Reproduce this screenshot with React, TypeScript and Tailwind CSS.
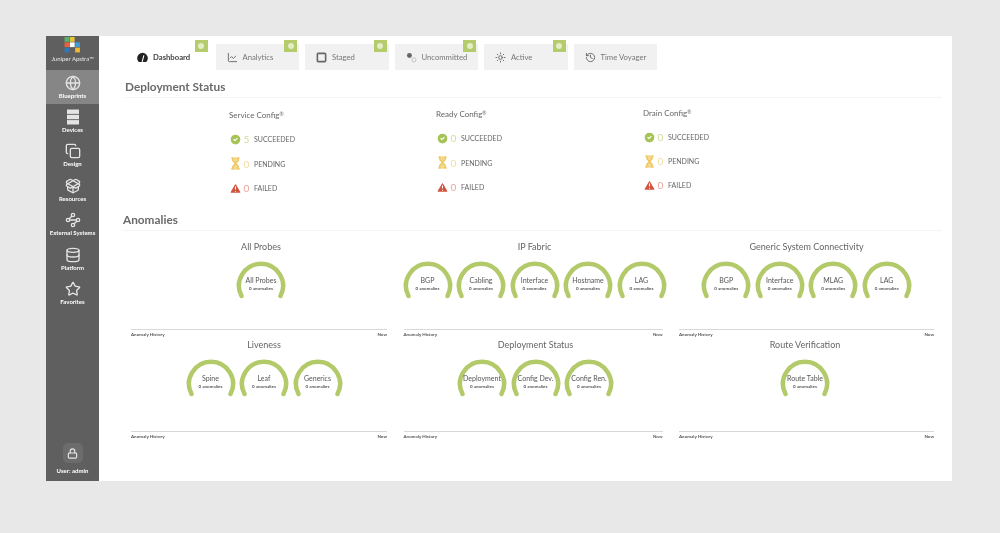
import React from 'react';
import { ChartLine, CircleCheck, Copy, Database, Globe, History, Hourglass, Lock, PackageOpen, Star, TriangleAlert, Waypoints, Sun, Square } from 'lucide-react';

const RackIcon: React.FC<{ className?: string }> = ({ className }) => (
  <svg viewBox="0 0 16 16" className={className} fill="currentColor">
    <rect x="2" y="0.5" width="12" height="4.4" />
    <rect x="2" y="5.8" width="12" height="4.4" />
    <rect x="2" y="11.1" width="12" height="4.4" />
  </svg>
);

const DashIcon: React.FC<{ className?: string }> = ({ className }) => (
  <svg viewBox="0 0 16 16" className={className}>
    <path d="M2.5 14.5 A7.8 7.8 0 1 1 13.5 14.5 Z" fill="currentColor" />
    <path d="M7.5 14.5 L10 5" stroke="#fff" strokeWidth="1.6" />
  </svg>
);

const UncommittedIcon: React.FC<{ className?: string }> = ({ className }) => (
  <svg viewBox="0 0 16 16" className={className}>
    <circle cx="5" cy="5" r="3.6" fill="#666" />
    <circle cx="11.5" cy="11.5" r="3" fill="none" stroke="#bbb" strokeWidth="1.2" />
  </svg>
);

const navItems = [
  { label: 'Blueprints', icon: Globe, active: true },
  { label: 'Devices', icon: RackIcon },
  { label: 'Design', icon: Copy },
  { label: 'Resources', icon: PackageOpen },
  { label: 'External Systems', icon: Waypoints },
  { label: 'Platform', icon: Database },
  { label: 'Favorites', icon: Star },
];

const tabs = [
  { label: 'Dashboard', icon: DashIcon, active: true, badge: true, stroke: 2 },
  { label: 'Analytics', icon: ChartLine, badge: true, stroke: 2 },
  { label: 'Staged', icon: Square, badge: true, stroke: 3.5 },
  { label: 'Uncommitted', icon: UncommittedIcon, badge: true, stroke: 2 },
  { label: 'Active', icon: Sun, badge: true, stroke: 2 },
  { label: 'Time Voyager', icon: History, stroke: 2 },
];

const configs = [
  { title: 'Service Config', ok: 5, shift: 'mt-0', gap: 'gap-y-[12.5px]' },
  { title: 'Ready Config', ok: 0, shift: '-mt-[1px]', gap: 'gap-y-[12.5px]' },
  { title: 'Drain Config', ok: 0, shift: '-mt-[2px]', gap: 'gap-y-[12px]' },
];

const Gauge: React.FC<{ name: string }> = ({ name }) => (
  <div className="relative w-[50px] h-[42px] shrink-0">
    <svg viewBox="0 0 50 42" className="w-[50px] h-[42px]">
      <path d="M5.5 37 A22 22 0 1 1 44.5 37" fill="none" stroke="#b3ca6a" strokeWidth="4.5" strokeLinecap="round" />
    </svg>
    <div className="absolute left-[-6px] right-[-6px] top-[17px] text-center">
      <div className="text-[7px] leading-[9px] text-[#555]">{name}</div>
      <div className="text-[4.5px] leading-[7px] font-bold text-[#555]">0 anomalies</div>
    </div>
  </div>
);

const ProbeGroup: React.FC<{ title: string; names: string[]; shift: string; height: string; gaugeGap: string }> = ({ title, names, shift, height, gaugeGap }) => (
  <div className="flex flex-col">
    <div className={`${shift} ${height}`}>
      <div className="text-center text-[9px] leading-[12px] text-[#666]">{title}</div>
      <div className={`flex justify-center gap-[3.5px] ${gaugeGap}`}>
        {names.map((n) => <Gauge key={n} name={n} />)}
      </div>
    </div>
    <div className="border-t border-[#d8d8d8]" />
    <div className="flex justify-between h-[9px] pt-[2px] text-[4.5px] leading-[6px] font-bold text-[#555]">
      <span>Anomaly History</span>
      <span>Now</span>
    </div>
  </div>
);

export default function App() {
  return (
    <div className="w-[1000px] h-[533px] bg-[#e8e8e8] pt-[36px] pl-[46px] overflow-hidden blur-[0.5px] font-['Lato',sans-serif]">
      <div className="w-[906px] h-[445px] bg-white flex">
        <aside className="w-[53px] bg-[#5f5f5f] flex flex-col items-stretch text-white">
          <div className="h-[34px] flex flex-col items-center pt-[1px]">
            <svg viewBox="0 0 16 16" className="w-[17px] h-[17px]">
              <rect x="0.5" y="0" width="4.5" height="4.5" fill="#5fb06c" />
              <rect x="5.5" y="0" width="4.5" height="4.5" fill="#e2c63f" />
              <rect x="0.5" y="5" width="4.5" height="4.5" fill="#e8603f" />
              <rect x="5.5" y="5" width="4.5" height="4.5" fill="#ffffff" />
              <rect x="10.5" y="5" width="4.5" height="4.5" fill="#3f9bd6" />
              <rect x="0.5" y="10" width="4.5" height="4.5" fill="#3577b5" />
              <rect x="10.5" y="10" width="4.5" height="4.5" fill="#f0b92f" />
            </svg>
            <span className="text-[6px] leading-[8px] mt-[1px] text-[#e8e8e8]">Juniper Apstra™</span>
          </div>
          {navItems.map(({ label, icon: Icon, active }) => (
            <div key={label} className={`h-[34.4px] flex flex-col items-center justify-center ${active ? 'bg-[#868686]' : ''}`}>
              <Icon className="w-[16px] h-[16px] text-[#e4e4e4]" strokeWidth={2} />
              <span className="text-[6px] leading-[8px] mt-[1px] font-bold whitespace-nowrap">{label}</span>
            </div>
          ))}
          <div className="mt-auto pb-[6px] flex flex-col items-center">
            <div className="w-[20px] h-[20px] rounded-[5px] bg-[#6c6c6c] flex items-center justify-center">
              <Lock className="w-[11px] h-[11px] text-[#e4e4e4]" strokeWidth={2.5} />
            </div>
            <span className="text-[6px] leading-[9px] mt-[3px] font-bold">User: admin</span>
          </div>
        </aside>

        <main className="flex-1 min-w-0 pl-[26px] pr-[10px]">
          <div className="flex gap-[6px] pt-[8px] ml-[1px]">
            {tabs.map(({ label, icon: Icon, active, badge, stroke }) => (
              <div key={label} className={`relative w-[83.5px] h-[26px] flex items-center pl-[11px] gap-[5px] ${active ? 'bg-white' : 'bg-[#f1f1f1]'}`}>
                <Icon className={`w-[11px] h-[11px] ${active ? 'text-[#222]' : 'text-[#666]'}`} strokeWidth={stroke} />
                <span className={`text-[7.7px] leading-[10px] whitespace-nowrap ${active ? 'font-bold text-[#444]' : 'text-[#777]'}`}>{label}</span>
                {badge && (
                  <span className="absolute right-[2px] top-[-4px] w-[13px] h-[12px] bg-[#b5cc6c] flex items-center justify-center">
                    <span className="w-[6px] h-[6px] rounded-full bg-[#e4edc8]" />
                  </span>
                )}
              </div>
            ))}
          </div>

          <h2 className="mt-[9px] text-[11.8px] leading-[16px] font-bold text-[#6a6a6a]">Deployment Status</h2>
          <div className="mt-[2px] border-t border-[#f4f4f4]" />

          <div className="flex pl-[104px] mt-[12px]">
            {configs.map((c) => (
              <div key={c.title} className={`w-[207px] shrink-0 ${c.shift}`}>
                <div className="h-[10px] text-[8px] leading-[10px] text-[#666]">{c.title}<sup className="text-[5px] leading-none">®</sup></div>
                <div className={`mt-[13px] flex flex-col ${c.gap}`}>
                  <div className="h-[12px] flex items-center gap-[1px]">
                    <CircleCheck className="w-[13px] h-[13px] text-white fill-[#a5c455]" />
                    <span className="w-[7px] mr-[3px] text-center text-[10px] leading-[12px] text-[#cfdc9c]">{c.ok}</span>
                    <span className="text-[7px] leading-[12px] text-[#666]">SUCCEEDED</span>
                  </div>
                  <div className="h-[12px] flex items-center gap-[1px]">
                    <Hourglass className="w-[13px] h-[13px] text-[#efc55a] fill-[#f3d98f]" strokeWidth={2.5} />
                    <span className="w-[7px] mr-[3px] text-center text-[10px] leading-[12px] text-[#f2dc9f]">0</span>
                    <span className="text-[7px] leading-[12px] text-[#666]">PENDING</span>
                  </div>
                  <div className="h-[12px] flex items-center gap-[1px]">
                    <TriangleAlert className="w-[13px] h-[13px] text-white fill-[#d0533f]" />
                    <span className="w-[7px] mr-[3px] text-center text-[10px] leading-[12px] text-[#e8a79c]">0</span>
                    <span className="text-[7px] leading-[12px] text-[#666]">FAILED</span>
                  </div>
                </div>
              </div>
            ))}
          </div>

          <h2 className="mt-[18px] -ml-[2px] text-[11.8px] leading-[16px] font-bold text-[#6a6a6a]">Anomalies</h2>
          <div className="-ml-[2px] mt-[2px] border-t border-[#f4f4f4]" />

          <div className="grid grid-cols-[256px_259px_255px] gap-x-[16.5px] ml-[6px] mt-[10px]">
            <ProbeGroup title="All Probes" names={['All Probes']} shift="pl-[4px]" height="h-[88px]" gaugeGap="mt-[6px]" />
            <ProbeGroup title="IP Fabric" names={['BGP', 'Cabling', 'Interface', 'Hostname', 'LAG']} shift="pl-[3px]" height="h-[88px]" gaugeGap="mt-[6px]" />
            <ProbeGroup title="Generic System Connectivity" names={['BGP', 'Interface', 'MLAG', 'LAG']} shift="" height="h-[88px]" gaugeGap="mt-[6px]" />
            <ProbeGroup title="Liveness" names={['Spine', 'Leaf', 'Generics']} shift="pl-[10px]" height="h-[92px]" gaugeGap="mt-[6px]" />
            <ProbeGroup title="Deployment Status" names={['Deployment', 'Config Dev.', 'Config Ren.']} shift="pl-[5px]" height="h-[92px]" gaugeGap="mt-[6px]" />
            <ProbeGroup title="Route Verification" names={['Route Table']} shift="pr-[3px]" height="h-[92px]" gaugeGap="mt-[6px]" />
          </div>
        </main>
      </div>
    </div>
  );
}
